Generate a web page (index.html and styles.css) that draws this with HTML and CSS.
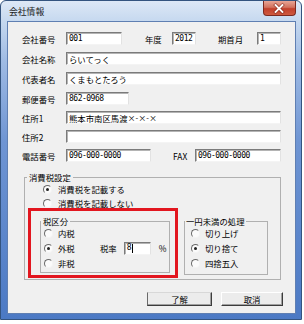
FILE: index.html
```html
<!DOCTYPE html>
<html lang="ja">
<head>
<meta charset="utf-8">
<title>会社情報</title>
<link rel="stylesheet" href="styles.css">
</head>
<body>
<div class="window">
  <div class="titlebar">
    <span class="title">会社情報</span>
    <span class="close">
      <svg width="33" height="15" viewBox="0 0 33 15">
        <path d="M13 4 L20 11 M20 4 L13 11" stroke="#6e1a10" stroke-width="3.6" stroke-linecap="square" opacity="0.55" fill="none"/>
        <path d="M13 4 L20 11 M20 4 L13 11" stroke="#ffffff" stroke-width="2" stroke-linecap="square" fill="none"/>
      </svg>
    </span>
  </div>
  <div class="client">
    <div class="form">
      <div class="row">
        <span class="lbl">会社番号</span>
        <span class="inp w-code mono">001</span>
        <span class="lbl l-year">年度</span>
        <span class="inp w-small mono">2012</span>
        <span class="lbl l-month">期首月</span>
        <span class="inp w-small mono">1</span>
      </div>
      <div class="row g7">
        <span class="lbl">会社名称</span>
        <span class="inp w-full">らいてっく</span>
      </div>
      <div class="row g7">
        <span class="lbl">代表者名</span>
        <span class="inp w-full">くまもとたろう</span>
      </div>
      <div class="row g7">
        <span class="lbl">郵便番号</span>
        <span class="inp w-zip mono">862-0968</span>
      </div>
      <div class="row">
        <span class="lbl">住所1</span>
        <span class="inp w-full">熊本市南区馬渡<span class="x">×-×-×</span></span>
      </div>
      <div class="row">
        <span class="lbl">住所2</span>
        <span class="inp w-full"></span>
      </div>
      <div class="row">
        <span class="lbl">電話番号</span>
        <span class="inp w-tel mono">096-000-0000</span>
        <span class="lbl l-fax">FAX</span>
        <span class="inp w-fax mono">096-000-0000</span>
      </div>
    </div>

    <fieldset class="grp grp-tax">
      <legend>消費税設定</legend>
      <div class="rrow first"><span class="radio on"></span><span class="rtext">消費税を記載する</span></div>
      <div class="rrow second"><span class="radio"></span><span class="rtext">消費税を記載しない</span></div>
      <div class="taxrow">
        <div class="hl">
          <fieldset class="grp grp-kubun">
            <legend>税区分</legend>
            <div class="rrow k first"><span class="radio"></span><span class="rtext">内税</span></div>
            <div class="rrow k"><span class="radio on"></span><span class="rtext t-soto">外税</span><span class="rate-lbl">税率</span><span class="inp w-rate mono">8<span class="caret"></span></span><span class="pct">%</span></div>
            <div class="rrow k"><span class="radio"></span><span class="rtext">非税</span></div>
          </fieldset>
        </div>
        <fieldset class="grp grp-round">
          <legend>一円未満の処理</legend>
          <div class="rrow r first"><span class="radio"></span><span class="rtext">切り上げ</span></div>
          <div class="rrow r"><span class="radio on"></span><span class="rtext">切り捨て</span></div>
          <div class="rrow r"><span class="radio"></span><span class="rtext">四捨五入</span></div>
        </fieldset>
      </div>
    </fieldset>

    <div class="buttons">
      <span class="btn btn-ok">了解</span>
      <span class="btn btn-cancel">取消</span>
    </div>
  </div>
</div>
</body>
</html>
```
FILE: styles.css
```css
* { box-sizing: border-box; }
html, body { margin: 0; padding: 0; background: #ffffff; }
body {
  font-family: "Noto Sans CJK JP", "Noto Sans", sans-serif;
  font-size: 8.4px;
  line-height: 10px;
  color: #000;
}

.window {
  width: 302px;
  height: 320px;
  border: 1px solid #34547f;
  border-radius: 6px 6px 0 0;
  background: linear-gradient(180deg, #dde8f6 0px, #c5d8ef 21px, #9fbbe4 60px, #6f95d3 140px, #4b79c4 320px);
  display: flex;
  flex-direction: column;
  padding: 0 6px 6px 7px;
}

.titlebar {
  height: 21px;
  display: flex;
  justify-content: space-between;
  align-items: flex-start;
}
.title {
  margin-top: 5px;
  margin-left: 1px;
  font-size: 8.8px;
  line-height: 11px;
  color: #1b1b1b;
}
.close {
  width: 33px;
  height: 15px;
  margin-right: -1px;
  border: 1px solid #7c2a20;
  border-top: none;
  border-radius: 0 0 4px 4px;
  background: linear-gradient(180deg, #e9a595 0%, #d2725f 45%, #c2402c 55%, #cf5a3f 100%);
  display: flex;
}
.close svg { display: block; margin-left: -1px; }

.client {
  flex: 1;
  background: #f0f0f0;
  outline: 1px solid #5f7fb2;
  display: flex;
  flex-direction: column;
}

.form {
  margin: 10px 0 0 14px;
  display: flex;
  flex-direction: column;
}
.row {
  display: flex;
  align-items: center;
  height: 13px;
  margin-top: 6px;
}
.row:first-child { margin-top: 0; }
.row.g7 { margin-top: 7px; }

.lbl { width: 44px; white-space: nowrap; flex: none; }
.l-year { width: 27px; margin-left: 23px; }
.l-month { width: 39px; margin-left: 22px; }
.l-fax { width: 22px; margin-left: 22px; }

.inp {
  flex: none;
  height: 13px;
  background: #fff;
  border: 1px solid;
  border-color: #7b7b7b #e2e2e2 #f4f4f4 #7b7b7b;
  box-shadow: inset 1px 1px 0 #b4b4b4;
  display: flex;
  align-items: center;
  padding-left: 2px;
  white-space: nowrap;
  overflow: hidden;
}
.mono {
  font-family: "DejaVu Sans Mono", "Liberation Mono", monospace;
  font-size: 8px;
  letter-spacing: -0.5px;
}
.x { font-size: 7.6px; letter-spacing: 0.3px; }
.w-code { width: 56px; }
.w-small { width: 24px; }
.w-full { width: 215px; }
.w-zip { width: 63px; }
.w-tel { width: 85px; }
.w-fax { width: 86px; }
.w-rate { width: 27px; margin-left: 7px; }
.caret { display: inline-block; width: 1px; height: 9px; background: #000; margin-left: 1px; }

.grp {
  margin: 0;
  padding: 0;
  min-width: 0;
  border: 1px solid #b0b0b0;
}
.grp legend {
  padding: 0 2px;
  line-height: 10px;
  font-size: 8.4px;
}
.grp-tax {
  margin: 10px 0 0 16px;
  width: 257px;
  padding-bottom: 1px;
}
.grp-tax > legend { margin-left: 2px; }

.rrow {
  display: flex;
  align-items: center;
  height: 10px;
  margin-left: 18px;
  margin-top: 4px;
}
.rrow.first { margin-top: 2px; }
.rrow.k { margin-left: 3px; margin-top: 5px; }
.rrow.k.first { margin-top: 2px; }
.rrow.r { margin-left: 6px; margin-top: 5px; }
.rrow.r.first { margin-top: 2px; }

.radio {
  flex: none;
  position: relative;
  width: 9px;
  height: 9px;
  border-radius: 50%;
  border: 1px solid;
  border-color: #6a6a6a #f4f4f4 #f4f4f4 #6a6a6a;
  background: #fbfbfb;
}
.radio.on::after {
  content: "";
  position: absolute;
  left: 2px;
  top: 2px;
  width: 3px;
  height: 3px;
  border-radius: 50%;
  background: #222;
}
.rtext { margin-left: 6px; white-space: nowrap; }
.rrow.k .rtext, .rrow.r .rtext { margin-left: 5px; }
.t-soto { width: 17px; }
.rate-lbl { margin-left: 25px; }
.pct { margin-left: 8px; }

.taxrow {
  display: flex;
  align-items: flex-start;
  margin-left: 3px;
}
.hl {
  border: 3px solid #e2161f;
  padding: 5px 5px 2px 9px;
}
.grp-kubun { width: 130px; padding-bottom: 4px; }
.grp-round { width: 84px; margin-left: 6px; margin-top: 8px; padding-bottom: 6px; }
.grp-round legend { padding: 0 1px; }

.buttons {
  display: flex;
  gap: 9px;
  margin: 12px 0 0 139px;
}
.btn {
  height: 14px;
  border: 1px solid;
  border-color: #ffffff #3c3c3c #3c3c3c #ffffff;
  box-shadow: inset -1px -1px 0 #a0a0a0;
  background: #ececec;
  display: flex;
  align-items: center;
  justify-content: center;
}
.btn-ok { width: 65px; border-left-color: #6a6a6a; border-top-color: #d8d8d8; }
.btn-cancel { width: 62px; }
```
